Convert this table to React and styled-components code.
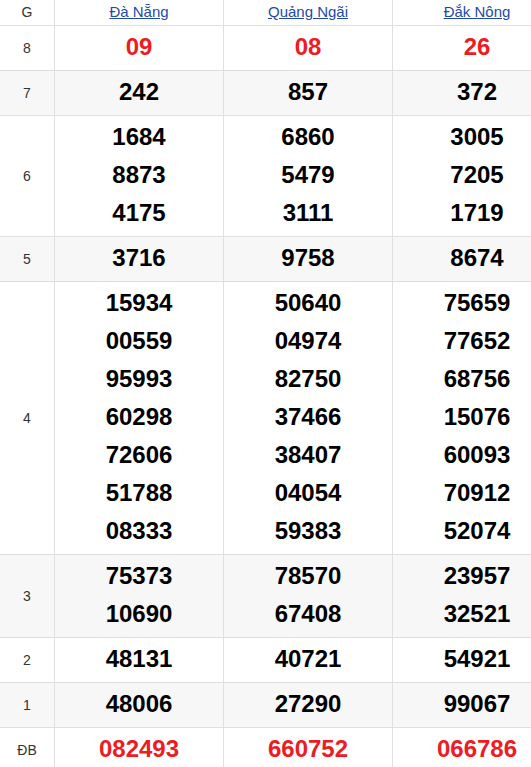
import React from "react";
import styled, { createGlobalStyle } from "styled-components";

const GlobalStyle = createGlobalStyle`
  html, body {
    margin: 0;
    padding: 0;
    background: #fff;
    font-family: "Liberation Sans", Arial, Helvetica, sans-serif;
  }
`;

const provinces = ["Đà Nẵng", "Quảng Ngãi", "Đắk Nông"];

const prizes = [
  { label: "8", red: true, values: [["09"], ["08"], ["26"]] },
  { label: "7", values: [["242"], ["857"], ["372"]] },
  {
    label: "6",
    values: [
      ["1684", "8873", "4175"],
      ["6860", "5479", "3111"],
      ["3005", "7205", "1719"],
    ],
  },
  { label: "5", values: [["3716"], ["9758"], ["8674"]] },
  {
    label: "4",
    values: [
      ["15934", "00559", "95993", "60298", "72606", "51788", "08333"],
      ["50640", "04974", "82750", "37466", "38407", "04054", "59383"],
      ["75659", "77652", "68756", "15076", "60093", "70912", "52074"],
    ],
  },
  {
    label: "3",
    values: [
      ["75373", "10690"],
      ["78570", "67408"],
      ["23957", "32521"],
    ],
  },
  { label: "2", values: [["48131"], ["40721"], ["54921"]] },
  { label: "1", values: [["48006"], ["27290"], ["99067"]] },
  { label: "ĐB", red: true, values: [["082493"], ["660752"], ["066786"]] },
];

const Table = styled.table`
  width: 562px;
  border-collapse: collapse;
  table-layout: fixed;
`;

const Row = styled.tr`
  background: ${(p) => (p.$shade ? "#f7f7f7" : "#fff")};
`;

const HeadCell = styled.th`
  height: 23px;
  padding: 0 0 2px;
  border: 1px solid #e0e0e0;
  border-top: none;
  font-weight: 400;
  font-size: 15px;
  text-align: center;
  vertical-align: middle;
  color: #333;
  &:first-child {
    width: 54px;
    font-size: 14px;
    border-left: none;
  }
`;

const Link = styled.a`
  color: #1f4aa8;
  text-decoration: underline;
  cursor: pointer;
`;

const LabelCell = styled.td`
  padding: 0;
  border: 1px solid #e0e0e0;
  border-left: none;
  font-size: 14px;
  color: #333;
  text-align: center;
  vertical-align: middle;
`;

const NumCell = styled.td`
  padding: 2px 0 4px;
  border: 1px solid #e0e0e0;
  text-align: center;
  vertical-align: middle;
`;

const Num = styled.div`
  font-size: 24px;
  line-height: 38px;
  font-weight: 700;
  color: ${(p) => (p.$red ? "#ed1c24" : "#000")};
`;

const App = () => (
  <>
    <GlobalStyle />
    <Table>
      <thead>
        <Row>
          <HeadCell>G</HeadCell>
          {provinces.map((name) => (
            <HeadCell key={name}>
              <Link>{name}</Link>
            </HeadCell>
          ))}
        </Row>
      </thead>
      <tbody>
        {prizes.map((prize, i) => (
          <Row key={prize.label} $shade={i % 2 === 1}>
            <LabelCell>{prize.label}</LabelCell>
            {prize.values.map((list, j) => (
              <NumCell key={j}>
                {list.map((n, k) => (
                  <Num key={k} $red={prize.red}>
                    {n}
                  </Num>
                ))}
              </NumCell>
            ))}
          </Row>
        ))}
      </tbody>
    </Table>
  </>
);

export default App;
